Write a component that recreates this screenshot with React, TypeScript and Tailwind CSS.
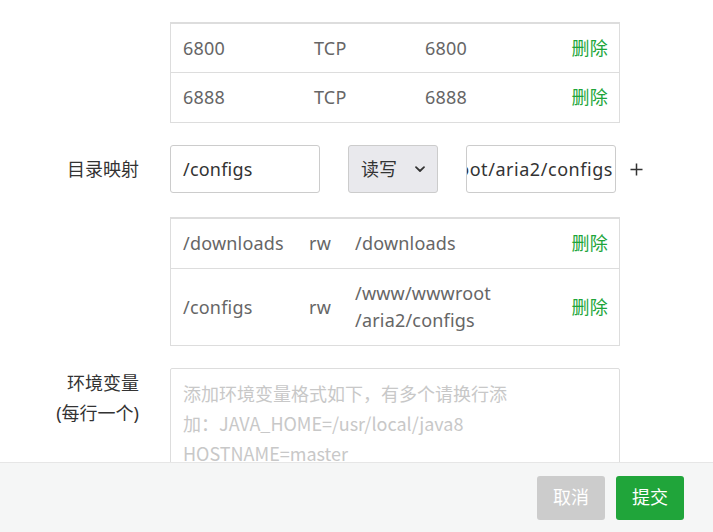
import React from "react";

const font = { fontFamily: '"Noto Sans", "Noto Sans CJK SC", sans-serif' };

function Label({ children }: { children: React.ReactNode }) {
  return (
    <div className="w-[170px] shrink-0 pr-[31px] text-right text-[18px] leading-[30px] text-[#333]">
      {children}
    </div>
  );
}

function Del() {
  return <span className="ml-auto text-[#20a53a]">删除</span>;
}

export default function App() {
  return (
    <div
      className="w-[713px] h-[532px] flex flex-col bg-white overflow-hidden text-[18px]"
      style={font}
    >
      <div className="flex-1 min-h-0 overflow-hidden pt-[22px]">
        {/* port table */}
        <div className="flex">
          <Label>{""}</Label>
          <div className="w-[450px] border border-[#ddd] border-t-2 text-[#666] tracking-[0.2px]">
            {[
              ["6800", "TCP", "6800"],
              ["6888", "TCP", "6888"],
            ].map((r, i) => (
              <div
                key={i}
                className={`flex items-center h-[49px] pl-[12px] pr-[11px] ${i === 0 ? "border-b border-[#ddd]" : ""}`}
              >
                <span className="w-[131px]">{r[0]}</span>
                <span className="w-[111px]">{r[1]}</span>
                <span>{r[2]}</span>
                <Del />
              </div>
            ))}
          </div>
        </div>

        {/* directory mapping inputs */}
        <div className="flex items-center mt-[22px]">
          <Label>目录映射</Label>
          <div className="flex items-center">
            <div className="w-[150px] h-[48px] border border-[#ccc] rounded-[3px] flex items-center px-[12px] text-[#333] tracking-[0.2px]">
              /configs
            </div>
            <div className="ml-[28px] w-[90px] h-[48px] border border-[#ccc] rounded-[3px] bg-[#e9e9ed] flex items-center pl-[12px] pr-[10px] text-[#333]">
              <span>读写</span>
              <svg className="ml-auto" width="14" height="14" viewBox="0 0 14 14" fill="none">
                <path d="M3 5.2 L7 9 L11 5.2" stroke="#333" strokeWidth="1.8" strokeLinecap="round" strokeLinejoin="round" />
              </svg>
            </div>
            <div className="ml-[28px] w-[150px] h-[48px] border border-[#ccc] rounded-[3px] flex items-center justify-end overflow-hidden pr-[2px] text-[#333] whitespace-nowrap tracking-[0.55px]">
              /www/wwwroot/aria2/configs
            </div>
            <svg className="ml-[14px]" width="13" height="13" viewBox="0 0 13 13">
              <path d="M6.5 0.5 V12.5 M0.5 6.5 H12.5" stroke="#333" strokeWidth="1.5" />
            </svg>
          </div>
        </div>

        {/* directory table */}
        <div className="flex mt-[24px]">
          <Label>{""}</Label>
          <div className="w-[450px] border border-[#ddd] border-t-2 text-[#666] leading-[27px] tracking-[0.2px]">
            <div className="flex items-center py-[11px] pl-[12px] pr-[11px] border-b border-[#ddd]">
              <span className="w-[126px]">/downloads</span>
              <span className="w-[46px]">rw</span>
              <span>/downloads</span>
              <Del />
            </div>
            <div className="flex items-center py-[11px] pl-[12px] pr-[11px]">
              <span className="w-[126px]">/configs</span>
              <span className="w-[46px]">rw</span>
              <span className="flex flex-col">
                <span>/www/wwwroot</span>
                <span>/aria2/configs</span>
              </span>
              <Del />
            </div>
          </div>
        </div>

        {/* env vars */}
        <div className="flex mt-[22px]">
          <Label>
            <div>环境变量</div>
            <div>(每行一个)</div>
          </Label>
          <div
            className="w-[450px] h-[130px] border border-[#ddd] rounded-[2px] pt-[9px] px-[12px] text-[#c8c8c8] leading-[30px]"
            style={{ fontFamily: '"Noto Sans CJK SC", "Noto Sans", sans-serif' }}
          >
            <div>添加环境变量格式如下，有多个请换行添</div>
            <div>加：JAVA_HOME=/usr/local/java8</div>
            <div>HOSTNAME=master</div>
          </div>
        </div>
      </div>

      {/* footer */}
      <div className="h-[70px] shrink-0 bg-[#f5f6f6] border-t border-[#e6e6e6] flex items-center justify-end pr-[29px] gap-[11px]">
        <button className="w-[68px] h-[44px] rounded-[3px] bg-[#cccccc] text-white text-[18px]">
          取消
        </button>
        <button className="w-[68px] h-[44px] rounded-[3px] bg-[#20a53a] text-white text-[18px]">
          提交
        </button>
      </div>
    </div>
  );
}
